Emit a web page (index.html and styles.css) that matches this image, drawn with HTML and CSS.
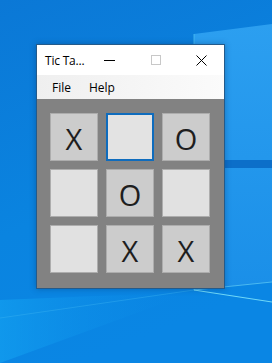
FILE: index.html
```html
<!doctype html>
<html>
<head>
    <meta charset="utf-8">
    <title>Tic Tac Toe</title>
    <link rel="stylesheet" href="styles.css">
</head>
<body>
    <svg class="wallpaper" width="272" height="363" viewBox="0 0 272 363">
        <defs>
            <linearGradient id="sky" x1="0" y1="0" x2="0.3" y2="1">
                <stop offset="0" stop-color="#0b78d6"/>
                <stop offset="0.6" stop-color="#0a84e0"/>
                <stop offset="1" stop-color="#0a86e4"/>
            </linearGradient>
            <linearGradient id="pane" x1="0" y1="0" x2="0" y2="1">
                <stop offset="0" stop-color="#2c9ff0"/>
                <stop offset="1" stop-color="#1a8fe8"/>
            </linearGradient>
            <linearGradient id="glow" x1="0" y1="0" x2="1" y2="0">
                <stop offset="0" stop-color="#14a4f2"/>
                <stop offset="1" stop-color="#0a86e4" stop-opacity="0"/>
            </linearGradient>
        </defs>
        <rect width="272" height="363" fill="url(#sky)"/>
        <polygon points="0,300 194,292 0,363" fill="url(#glow)" opacity="0.6"/>
        <polygon points="194,34 272,24 272,282 194,290" fill="url(#pane)"/>
        <polygon points="194,160 272,160 272,168 194,168" fill="#0c6fc9"/>
        <line x1="194" y1="34" x2="194" y2="290" stroke="#4cc0f4" stroke-width="1" opacity="0.8"/>
        <line x1="0" y1="318" x2="194" y2="290" stroke="#3cb4f2" stroke-width="1" opacity="0.4"/>
        <line x1="194" y1="290" x2="272" y2="282" stroke="#6fd8f8" stroke-width="1" opacity="0.6"/>
        <line x1="194" y1="290" x2="272" y2="302" stroke="#6fd8f8" stroke-width="1.2"/>
    </svg>

    <div class="window">
        <div class="titlebar">
            <span class="title">Tic Ta...</span>
            <span class="caption-btn">
                <svg width="11" height="11" viewBox="0 0 11 11"><line x1="0" y1="5.5" x2="11" y2="5.5" stroke="#000" stroke-width="1"/></svg>
            </span>
            <span class="caption-btn">
                <svg width="10" height="10" viewBox="0 0 10 10"><rect x="0.5" y="0.5" width="9" height="9" fill="none" stroke="#c8c8c8" stroke-width="1"/></svg>
            </span>
            <span class="caption-btn">
                <svg width="11" height="11" viewBox="0 0 11 11"><path d="M0.5 0.5 L10.5 10.5 M10.5 0.5 L0.5 10.5" stroke="#000" stroke-width="1"/></svg>
            </span>
        </div>
        <div class="menubar">
            <span class="menu-item">File</span>
            <span class="menu-item">Help</span>
        </div>
        <div class="board">
            <div class="cell mark">X</div>
            <div class="cell focused"></div>
            <div class="cell mark">O</div>
            <div class="cell"></div>
            <div class="cell mark">O</div>
            <div class="cell"></div>
            <div class="cell"></div>
            <div class="cell mark">X</div>
            <div class="cell mark">X</div>
        </div>
    </div>
</body>
</html>
```

FILE: styles.css
```css
html, body {
    margin: 0;
    width: 272px;
    height: 363px;
    overflow: hidden;
    background: #0a80de;
}

.wallpaper {
    position: absolute;
    left: 0;
    top: 0;
    display: block;
}

.window {
    position: absolute;
    left: 36px;
    top: 44px;
    width: 187px;
    border: 1px solid #245a8a;
    font-family: "Open Sans", "Noto Sans", sans-serif;
    box-shadow: 0 0 6px rgba(0, 40, 90, 0.35);
}

.titlebar {
    height: 30px;
    background: #fff;
    display: flex;
    align-items: center;
}

.title {
    flex: 0 0 50px;
    box-sizing: border-box;
    font-size: 12px;
    color: #000;
    padding-left: 8px;
    white-space: nowrap;
    letter-spacing: -0.2px;
}

.caption-btn {
    flex: 1 1 0;
    height: 30px;
    display: flex;
    align-items: center;
    justify-content: center;
}

.caption-btn svg {
    display: block;
}

.menubar {
    height: 24px;
    display: flex;
    align-items: center;
    gap: 18px;
    padding-left: 15px;
    background: linear-gradient(to right, #efefef, #fbfbfb);
}

.menu-item {
    font-size: 12px;
    color: #000;
}

.board {
    background: #828282;
    padding: 14px 14px 15px 13px;
    display: grid;
    grid-template-columns: repeat(3, 48px);
    grid-auto-rows: 48px;
    gap: 8px;
}

.cell {
    box-sizing: border-box;
    background: #e1e1e1;
    border: 1px solid #adadad;
    display: flex;
    align-items: center;
    justify-content: center;
    font-family: "Open Sans", "Noto Sans", sans-serif;
    font-size: 29px;
    color: #1e1e1e;
    line-height: 1;
    padding-top: 2px;
}

.cell.mark {
    background: #cccccc;
}

.cell.focused {
    border: 2px solid #0f6cbd;
    background: #e3e3e3;
}
```
